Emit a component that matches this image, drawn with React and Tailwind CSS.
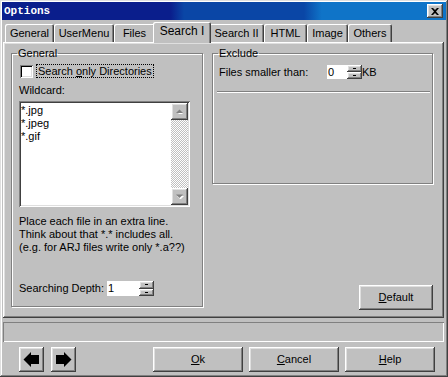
import React from 'react';

const raised =
  'shadow-[inset_-1px_-1px_0_#404040,inset_1px_1px_0_#ffffff,inset_-2px_-2px_0_#808080,inset_2px_2px_0_#dfdfdf]';
const sunken =
  'shadow-[inset_1px_1px_0_#808080,inset_-1px_-1px_0_#ffffff,inset_2px_2px_0_#404040,inset_-2px_-2px_0_#dfdfdf]';
const etched = 'border border-[#808080] shadow-[inset_1px_1px_0_#ffffff,1px_1px_0_#ffffff]';

const tabs = [
  { label: 'General', w: 'w-[49px]' },
  { label: 'UserMenu', w: 'w-[60px]' },
  { label: 'Files', w: 'w-[41px]' },
  { label: 'Search I', w: 'w-[58px]', active: true },
  { label: 'Search II', w: 'w-[55px]' },
  { label: 'HTML', w: 'w-[43px]' },
  { label: 'Image', w: 'w-[41px]' },
  { label: 'Others', w: 'w-[44px]' },
];

function Spinner({ h }) {
  // two tiny raised halves, like the old up/down control
  return (
    <div className={`flex flex-col w-[15px] ${h}`}>
      <div className={`flex-1 bg-[#c0c0c0] ${raised} flex items-center justify-center`}>
        <div className="w-[3px] h-[1px] bg-black" />
      </div>
      <div className={`flex-1 bg-[#c0c0c0] ${raised} flex items-center justify-center`}>
        <div className="w-[3px] h-[1px] bg-black" />
      </div>
    </div>
  );
}

function ScrollBtn({ up }) {
  return (
    <div className={`w-[17px] h-[17px] bg-[#c0c0c0] ${raised} flex items-center justify-center`}>
      <svg width="9" height="5" viewBox="0 0 9 5">
        {up ? (
          <>
            <polygon points="1,5 4.5,1.5 8,5" fill="#ffffff" transform="translate(1,1)" />
            <polygon points="1,4 4.5,0.5 8,4" fill="#808080" />
          </>
        ) : (
          <>
            <polygon points="1,1 4.5,4.5 8,1" fill="#ffffff" transform="translate(1,1)" />
            <polygon points="1,0.5 4.5,4 8,0.5" fill="#808080" />
          </>
        )}
      </svg>
    </div>
  );
}

function Button({ children, w }) {
  return (
    <button className={`${w} h-[25px] bg-[#c0c0c0] ${raised} flex items-center justify-center text-[11px] text-black`}>
      {children}
    </button>
  );
}

function Arrow({ dir }) {
  return (
    <button className={`w-[25px] h-[25px] bg-[#c0c0c0] ${raised} flex items-center justify-center`}>
      <svg width="17" height="17" viewBox="0 0 17 17">
        {dir === 'left' ? (
          <polygon points="0.5,8.5 8,1 8,4 16,4 16,13 8,13 8,16" fill="#000" />
        ) : (
          <polygon points="16.5,8.5 9,1 9,4 1,4 1,13 9,13 9,16" fill="#000" />
        )}
      </svg>
    </button>
  );
}

export default function App() {
  return (
    <div className="w-[448px] h-[377px] bg-[#c0c0c0] p-[2px] flex flex-col font-['Liberation_Sans',Arial,sans-serif] text-[11px] leading-[13px] text-black shadow-[inset_-1px_-1px_0_#404040,inset_1px_1px_0_#dfdfdf,inset_-2px_-2px_0_#808080,inset_2px_2px_0_#ffffff]">
      {/* title bar */}
      <div className="h-[18px] flex items-center justify-between pl-[2px] pr-[3px] bg-[linear-gradient(90deg,#0a1e8c_0%,#0a1e8c_38%,#0a46a6_41%,#0a46a6_68%,#0f74c8_72%,#0f74c8_100%)]">
        <span className="text-white font-bold text-[11px] font-['Liberation_Mono',monospace] tracking-[0px]">Options</span>
        <div className={`w-[16px] h-[14px] bg-[#c0c0c0] ${raised} flex items-center justify-center`}>
          <svg width="8" height="7" viewBox="0 0 8 7">
            <path d="M0,0 L2,0 L4,2 L6,0 L8,0 L5,3.5 L8,7 L6,7 L4,5 L2,7 L0,7 L3,3.5 Z" fill="#000" />
          </svg>
        </div>
      </div>

      {/* tabs */}
      <div className="h-[22px] flex items-end pl-[3px]">
        {tabs.map((t) =>
          t.active ? (
            <div
              key={t.label}
              className={`${t.w} h-[21px] -mx-[2px] -mb-[1px] relative z-10 bg-[#c0c0c0] rounded-t-[2px] shadow-[inset_1px_1px_0_#ffffff,inset_-1px_0_0_#404040,inset_-2px_0_0_#808080] flex items-start justify-center pt-[3px] text-[12px]`}
            >
              {t.label}
            </div>
          ) : (
            <div
              key={t.label}
              className={`${t.w} h-[18px] bg-[#c0c0c0] rounded-t-[2px] shadow-[inset_1px_1px_0_#ffffff,inset_-1px_0_0_#404040,inset_-2px_0_0_#808080] flex items-center justify-center pt-[1px]`}
            >
              {t.label}
            </div>
          )
        )}
      </div>

      {/* panel */}
      <div className={`ml-[1px] w-[441px] h-[276px] bg-[#c0c0c0] ${raised} flex gap-[9px] pl-[8px] pt-[5px]`}>
        {/* General group */}
        <fieldset className={`w-[192px] h-[260px] ${etched} pl-[7px] pr-[6px] pt-[4px]`}>
          <legend className="-ml-[2px] px-[1px] leading-[13px]">General</legend>
          <div className="flex items-center h-[14px]">
            <div className="w-[13px] h-[13px] bg-white shadow-[inset_1px_1px_0_#808080,inset_-1px_-1px_0_#ffffff,inset_2px_2px_0_#000000,inset_-2px_-2px_0_#dfdfdf] ml-[1px]" />
            <span className="ml-[3px] border border-dotted border-black px-[1px] leading-[12px]">
              Search <u>o</u>nly Directories
            </span>
          </div>
          <div className="mt-[6px]">Wildcard:</div>
          <div className={`mt-[4px] w-[171px] h-[106px] bg-white ${sunken} flex p-[2px]`}>
            <div className="flex-1 pl-[0px] pt-[1px] leading-[13px]">
              <div>*.jpg</div>
              <div>*.jpeg</div>
              <div>*.gif</div>
            </div>
            <div className="w-[17px] flex flex-col">
              <ScrollBtn up />
              <div className="flex-1 bg-[repeating-conic-gradient(#ffffff_0_25%,#c0c0c0_0_50%)] bg-[length:2px_2px]" />
              <ScrollBtn />
            </div>
          </div>
          <div className="mt-[8px] leading-[13px]">
            <div>Place each file in an extra line.</div>
            <div>Think about that *.* includes all.</div>
            <div>(e.g. for ARJ files write only *.a??)</div>
          </div>
          <div className="mt-[27px] flex items-center h-[15px]">
            <span className="w-[88px]">Searching Depth:</span>
            <div className="w-[32px] h-[15px] bg-white pl-[1px] leading-[15px]">1</div>
            <Spinner h="h-[15px]" />
          </div>
        </fieldset>

        {/* right column */}
        <div className="w-[221px] h-[263px] flex flex-col">
          <fieldset className={`h-[137px] ${etched} pl-[6px] pt-[5px]`}>
            <legend className="-ml-[1px] px-[1px] leading-[13px]">Exclude</legend>
            <div className="flex items-center h-[14px]">
              <span className="w-[108px]">Files smaller than:</span>
              <div className="w-[20px] h-[14px] bg-white pl-[1px] leading-[14px]">0</div>
              <Spinner h="h-[14px]" />
              <span>KB</span>
            </div>
            <div className="mt-[12px] -ml-[2px] w-[213px] border-t border-[#808080] border-b border-b-white" />
          </fieldset>
          <div className="mt-auto self-end">
            <Button w="w-[74px]">
              <span>
                <u>D</u>efault
              </span>
            </Button>
          </div>
        </div>
      </div>

      {/* status bar */}
      <div className="mt-[4px] ml-[1px] w-[441px] h-[20px] shadow-[inset_1px_1px_0_#808080,inset_-1px_-1px_0_#ffffff]" />

      {/* bottom buttons */}
      <div className="mt-[5px] h-[25px] flex items-center">
        <div className="ml-[17px] flex gap-[7px]">
          <Arrow dir="left" />
          <Arrow dir="right" />
        </div>
        <div className="ml-[77px] flex gap-[6px]">
          <Button w="w-[90px]">
            <span>
              <u>O</u>k
            </span>
          </Button>
          <Button w="w-[90px]">
            <span>
              <u>C</u>ancel
            </span>
          </Button>
          <Button w="w-[90px]">
            <span>
              <u>H</u>elp
            </span>
          </Button>
        </div>
      </div>
    </div>
  );
}
